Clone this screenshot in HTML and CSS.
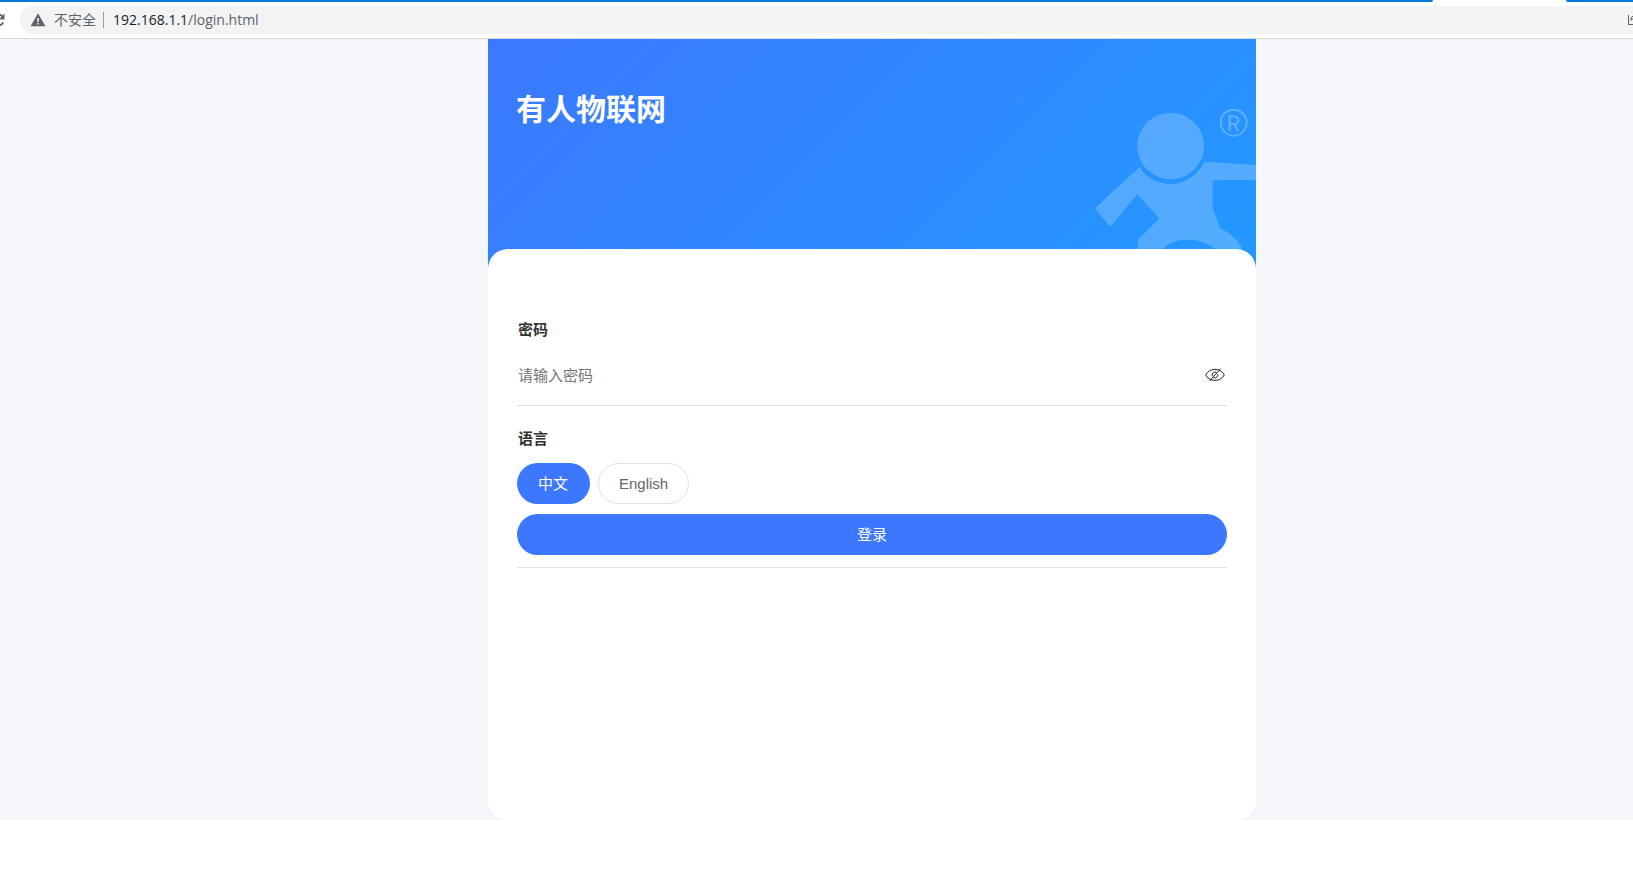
FILE: index.html
```html
<!DOCTYPE html>
<html lang="zh-CN">
  <head>
    <meta charset="UTF-8" />
    <meta name="viewport" content="width=device-width, initial-scale=1.0" />
    <title>有人物联网</title>
    <link rel="stylesheet" href="styles.css">
  </head>
  <body>
    <header class="browser">
      <div class="tab-strip">
        <span class="tab-left"></span>
        <span class="tab-active"></span>
        <span class="tab-right"></span>
      </div>
      <div class="toolbar">
        <button class="reload" type="button" aria-label="刷新">
          <svg width="14" height="14" viewBox="0 0 14 14">
            <path d="M12.2 9.3A5.6 5.6 0 1 1 11.4 3.4" fill="none" stroke="#5f6368" stroke-width="2" />
            <path d="M13.5 .5v6H7.8z" fill="#5f6368" />
          </svg>
        </button>
        <div class="address">
          <svg class="warn" width="16" height="14" viewBox="0 0 16 14">
            <path d="M8 .3 15.4 13.3H.6z" fill="#5f6368" />
            <path d="M7.2 5h1.6v4H7.2zM7.2 10h1.6v1.6H7.2z" fill="#f1f3f4" />
          </svg>
          <span class="insecure">不安全</span>
          <span class="url"><b>192.168.1.1</b>/login.html</span>
          <svg class="translate" width="5" height="12" viewBox="0 0 5 12">
            <path d="M.5 1v9.500H5" fill="none" stroke="#5f6368" />
            <path d="M3 7V4l2-2M3 5h2" fill="none" stroke="#5f6368" />
          </svg>
        </div>
      </div>
    </header>

    <main class="page">
      <div class="container">
        <div class="banner">
          <h1>有人物联网</h1>
          <svg class="mascot" width="161" height="160" viewBox="45 57 483 480">
            <g fill="#fff" fill-opacity=".21">
              <circle cx="272" cy="168" r="100" />
              <path d="M178 232C200 265 234 282 272 282C314 282 352 256 374 215L528 225V269L398 271V354L420 415C452 430 474 452 487 478L500 537H170L174 449L238 386L172 312L90 410L45 355Z M249 477H405C385 460 360 449 326 449C292 449 264 457 249 477Z" fill-rule="evenodd" />
            </g>
            <g fill="none" stroke="#fff" stroke-opacity=".25">
              <circle cx="461" cy="98" r="39" stroke-width="6" />
              <path d="M449 123V79H462C479 79 479 102 462 102H449M463 102L474 123" stroke-width="7" />
            </g>
          </svg>
        </div>

        <form class="panel">
          <label class="title" for="password">密码</label>
          <div class="field">
            <input id="password" type="password" placeholder="请输入密码" />
            <button class="eye" type="button" aria-label="显示密码">
              <svg width="20" height="14" viewBox="0 0 20 14" fill="none" stroke="#222">
                <path d="M.7 7C4.500-.6 15.500-.6 19.300 7C15.500 14.200 4.500 14.200 .7 7Z" />
                <path d="M11.500 4.300A3 3 0 0 0 7.300 8M12.600 6A3 3 0 0 1 8.500 9.700M4.500 13 15.500 .7" />
              </svg>
            </button>
          </div>
          <fieldset class="language">
            <legend class="title">语言</legend>
            <div class="options">
              <button class="pill active" type="button">中文</button>
              <button class="pill" type="button">English</button>
            </div>
          </fieldset>
          <div class="submit">
            <button class="login" type="button">登录</button>
          </div>
        </form>
      </div>
    </main>
  </body>
</html>
```

FILE: styles.css
```css
* {
  margin: 0;
  padding: 0;
  box-sizing: border-box;
}

body {
  font-family: "Liberation Sans", "Noto Sans CJK SC", sans-serif;
  font-size: 15px;
  color: #333;
  background-color: #fff;
}

button {
  font: inherit;
  border: none;
  background: none;
  cursor: pointer;
}

svg {
  display: block;
}

/* browser bar */
.browser {
  border-bottom: 1px solid #dadcdb;
}

.tab-strip {
  display: flex;
  height: 2px;
}

.tab-left {
  flex: 1;
  background-color: #0078d7;
  border-bottom-right-radius: 2px;
}

.tab-active {
  width: 133px;
}

.tab-right {
  width: 67px;
  background-color: #0078d7;
  border-bottom-left-radius: 2px;
}

.toolbar {
  display: flex;
  align-items: center;
  padding: 4px 0;
}

.reload {
  width: 20px;
  margin-left: -9px;
  margin-right: 9px;
}

.address {
  flex: 1;
  display: flex;
  align-items: center;
  height: 28px;
  padding-left: 10px;
  background-color: #f1f3f4;
  border-radius: 14px 0 0 14px;
  font-family: "Open Sans", "Noto Sans CJK SC", sans-serif;
  font-size: 14px;
  line-height: 16px;
  color: #5f6368;
}

.insecure {
  margin-left: 8px;
  padding-right: 7px;
  border-right: 1px solid #9aa0a6;
}

.url {
  margin-left: 9px;
}

.url b {
  font-weight: normal;
  color: #202124;
}

.translate {
  margin-left: auto;
}

/* login page */
.page {
  display: grid;
  grid-template-columns: 488fr minmax(0, 768px) 377fr;
  background-color: #f5f6fb;
}

.container {
  grid-column: 2;
}

.banner {
  position: relative;
  height: 230px;
  padding: 49px 28px;
  background: linear-gradient(135deg, #3c78ff, #2299ff);
}

.banner h1 {
  font-size: 30px;
  line-height: 44px;
  color: #fff;
}

.mascot {
  position: absolute;
  right: 0;
  bottom: 0;
}

.panel {
  position: relative;
  min-height: 571px;
  margin-top: -20px;
  padding: 69px 29px 0;
  background-color: #fff;
  border-radius: 20px;
}

.title {
  display: block;
  padding-left: 1px;
  font-weight: bold;
  line-height: 24px;
}

.field {
  display: flex;
  align-items: center;
  height: 64px;
  padding: 3px 2px 0 1px;
  border-bottom: 1px solid #e1e2e4;
}

.field input {
  flex: 1;
  min-width: 0;
  height: 40px;
  border: none;
  outline: none;
  font: inherit;
}

.field input::placeholder {
  color: #757575;
}

.language {
  margin-top: 21px;
  border: none;
}

.options {
  display: flex;
  gap: 8px;
  margin-top: 12px;
}

.pill {
  height: 41px;
  padding: 0 20px 1px;
  border: 1px solid #dfdfe8;
  border-radius: 21px;
  color: #666;
}

.pill.active {
  padding: 0 22px 2px 21px;
  border: none;
  background-color: #3c78ff;
  color: #fff;
}

.submit {
  padding: 10px 0 12px;
  border-bottom: 1px solid #e1e2e4;
}

.login {
  display: block;
  width: 100%;
  height: 41px;
  padding-bottom: 2px;
  border-radius: 21px;
  background-color: #3c78ff;
  color: #fff;
}
```
